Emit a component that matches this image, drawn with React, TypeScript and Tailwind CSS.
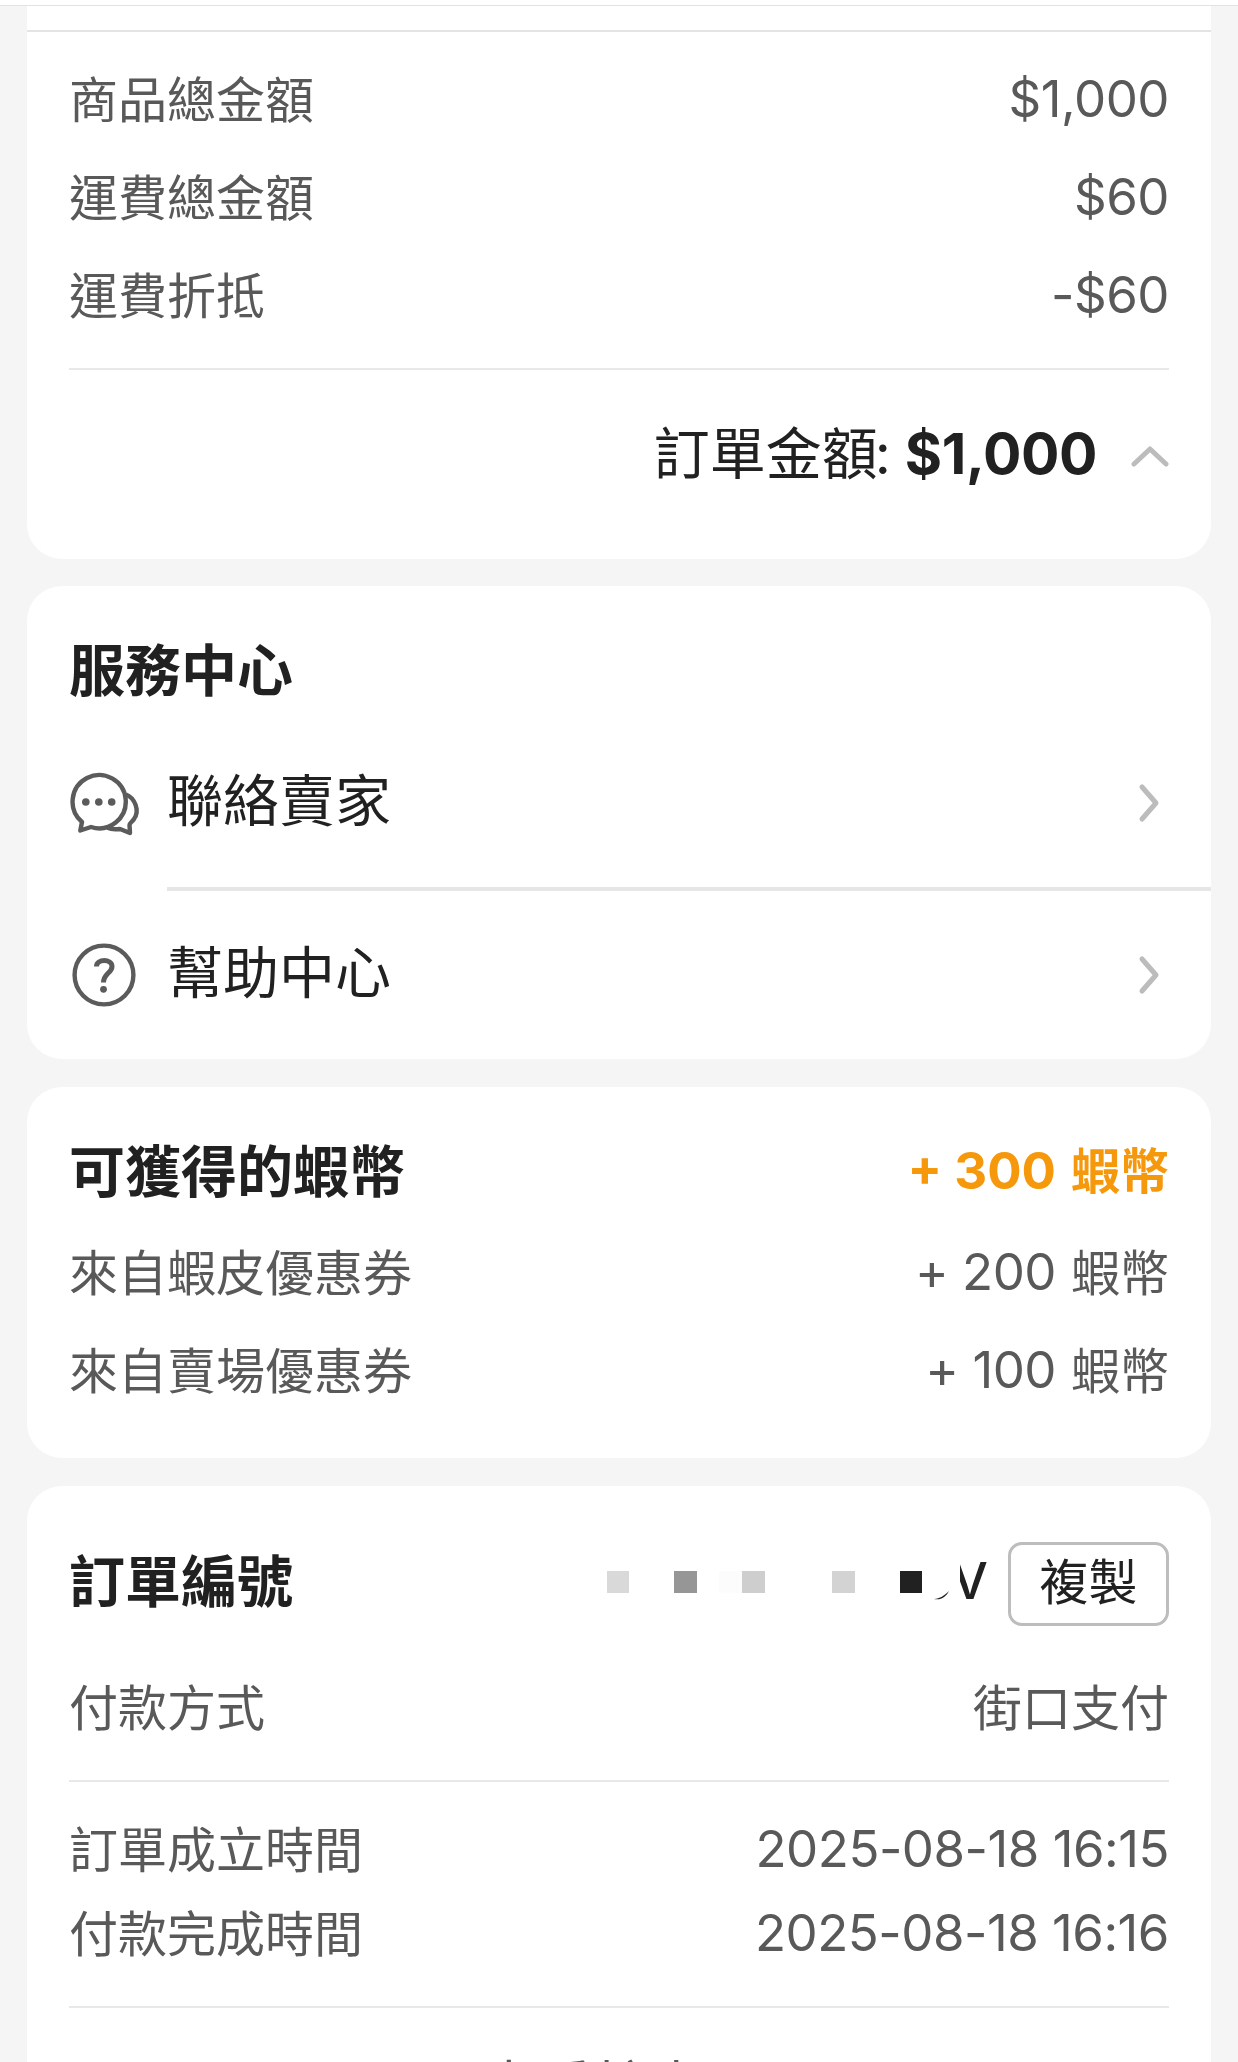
import type { ReactNode } from 'react'

interface RowProps {
  label: string
  value: string
  unit?: string
}

function Row({ label, value, unit }: RowProps) {
  return (
    <div className="flex h-[98px] items-center justify-between">
      <span className="pt-[3px]">{label}</span>
      <span className="flex items-center">
        <span className="text-[51px] tracking-[-0.5px]">{value}</span>
        {unit && <span className="ml-[15px] pt-[3px]">{unit}</span>}
      </span>
    </div>
  )
}

function ChevronRight() {
  return (
    <svg className="mr-[8px] h-[40px] w-[22px]" viewBox="0 0 22 40" fill="none" stroke="#bcbcbc" strokeWidth="5" strokeLinecap="round" strokeLinejoin="round">
      <path d="M4 4L18 20L4 36" />
    </svg>
  )
}

function ChevronUp() {
  return (
    <svg className="mt-[4px] ml-[34px] h-[22px] w-[38px]" viewBox="0 0 38 22" fill="none" stroke="#bcbcbc" strokeWidth="5" strokeLinecap="round" strokeLinejoin="round">
      <path d="M3 19L19 4L35 19" />
    </svg>
  )
}

function ChatIcon() {
  return (
    <svg className="mt-[2px] h-[64px] w-[72px]" viewBox="0 0 72 64" fill="none" stroke="#5b5b5b" strokeWidth="4.4" strokeLinejoin="round">
      <path d="M13 50A26.6 26.6 0 1 1 22 55L11.3 58.5Z" />
      <path d="M57 22.5C66 26 71 39 65 47C63.5 49.5 60.5 51 60.5 53L61 61L51 57C47 57.5 42 57.5 38.5 55.8" />
      <g fill="#5b5b5b" stroke="none">
        <circle cx="16.8" cy="30" r="3.8" />
        <circle cx="29.8" cy="30" r="3.8" />
        <circle cx="42.7" cy="30" r="3.8" />
      </g>
    </svg>
  )
}

function HelpIcon() {
  return (
    <svg className="h-[68px] w-[72px]" viewBox="0 0 72 68" fill="none" stroke="#5b5b5b">
      <circle cx="35" cy="34" r="29.4" strokeWidth="4.4" />
      <path d="M27.5 25.5C27.5 17.5 43 17.5 43 25.5C43 32 34.5 32.5 34.5 41.5" strokeWidth="5" />
      <circle cx="34.5" cy="48.3" r="3.4" fill="#5b5b5b" stroke="none" />
    </svg>
  )
}

interface ServiceRowProps {
  icon: ReactNode
  label: string
}

function ServiceRow({ icon, label }: ServiceRowProps) {
  return (
    <div className="flex h-[80px] items-center pr-[43px] pl-[42px] text-[56px] text-[#212121]">
      {icon}
      <span className="-mt-[5px] ml-[26px] flex-1">{label}</span>
      <ChevronRight />
    </div>
  )
}

export default function App() {
  return (
    <div className="h-[2062px] w-[1238px] overflow-hidden bg-[#f5f5f5] font-['Inter','Noto_Sans_CJK_TC',sans-serif] text-[49px] leading-[56px] whitespace-nowrap text-[#595959]">
      <div className="h-[6px] border-b border-[#e2e2e2] bg-white" />

      {/* Amounts */}
      <section className="mx-[27px] h-[553px] rounded-b-[35px] bg-white">
        <div className="h-[26px] border-b-2 border-[#e4e4e4]" />
        <div className="mx-[42px]">
          <div className="h-[338px] border-b-2 border-[#e8e8e8] pt-[18px]">
            <Row label="商品總金額" value="$1,000" />
            <Row label="運費總金額" value="$60" />
            <Row label="運費折抵" value="-$60" />
          </div>
          <div className="flex h-[168px] items-center justify-end text-[56px] text-[#212121]">
            <span>訂單金額</span>
            <span className="-ml-[3px]">:</span>
            <span className="ml-[14px] text-[57px] font-bold tracking-[-0.4px]">$1,000</span>
            <ChevronUp />
          </div>
        </div>
      </section>

      {/* Service center */}
      <section className="mx-[27px] mt-[27px] h-[473px] rounded-[35px] bg-white pt-[57px]">
        <h2 className="mb-[48px] ml-[42px] text-[56px] font-bold text-[#212121]">服務中心</h2>
        <div className="pt-[16px]">
          <ServiceRow icon={<ChatIcon />} label="聯絡賣家" />
        </div>
        <div className="mt-[44px] ml-[140px] h-[4px] bg-[#e6e6e6]" />
        <div className="mt-[44px]">
          <ServiceRow icon={<HelpIcon />} label="幫助中心" />
        </div>
      </section>

      {/* Coins */}
      <section className="mx-[27px] mt-[28px] h-[371px] rounded-[35px] bg-white px-[42px] pt-[56px]">
        <div className="mb-[24px] flex h-[56px] items-center justify-between font-bold">
          <h2 className="pt-[2px] text-[56px] text-[#212121]">可獲得的蝦幣</h2>
          <span className="flex items-center text-[#f6980c]">
            <span className="text-[51px]">+ 300</span>
            <span className="ml-[15px] pt-[2px]">蝦幣</span>
          </span>
        </div>
        <Row label="來自蝦皮優惠券" value="+ 200" unit="蝦幣" />
        <Row label="來自賣場優惠券" value="+ 100" unit="蝦幣" />
      </section>

      {/* Order info */}
      <section className="mx-[27px] mt-[28px] h-[650px] rounded-t-[35px] bg-white px-[42px] pt-[56px]">
        <div className="flex h-[84px] items-center">
          <h2 className="-mt-[4px] text-[56px] font-bold text-[#212121]">訂單編號</h2>
          {/* masked order number, only the last letter stays readable */}
          <div className="-mt-[4px] ml-auto flex h-[22px] text-[#212121]">
            <i className="mr-[45px] w-[22px] bg-[#d9d9d9]" />
            <i className="mr-[22px] w-[23px] bg-[#969696]" />
            <i className="w-[23px] bg-[#fcfcfc]" />
            <i className="mr-[67px] w-[23px] bg-[#cecece]" />
            <i className="mr-[45px] w-[23px] bg-[#d3d3d3]" />
            <i className="w-[22px] bg-[#212121]" />
            <svg className="mt-[20px] ml-[12px] h-[9px] w-[15px]" viewBox="0 0 15 9">
              <path d="M0 8C6 7.5 10 5 15 0C12 6 7 9.5 0 8Z" fill="#212121" />
            </svg>
            <span className="-mt-[18px] mr-[20px] ml-[11px] flex h-[56px] w-[28px] justify-end overflow-hidden text-[51px] font-medium">V</span>
          </div>
          <button className="h-[84px] w-[161px] rounded-[14px] border-[3px] border-[#bdbdbd] pb-[3px] text-[#212121]">複製</button>
        </div>
        <div className="h-[156px] border-b-2 border-[#e8e8e8] pt-[33px]">
          <div className="flex h-[98px] items-center justify-between pt-[2px]">
            <span>付款方式</span>
            <span>街口支付</span>
          </div>
        </div>
        <div className="h-[226px] border-b-2 border-[#e8e8e8] pt-[18px]">
          <div className="-mb-[14px]">
            <Row label="訂單成立時間" value="2025-08-18 16:15" />
          </div>
          <Row label="付款完成時間" value="2025-08-18 16:16" />
        </div>
        <div className="flex items-center justify-center pt-[51px] text-[56px]">
          <span>查看較少</span>
          <span className="w-[52px]" />
        </div>
      </section>
    </div>
  )
}
